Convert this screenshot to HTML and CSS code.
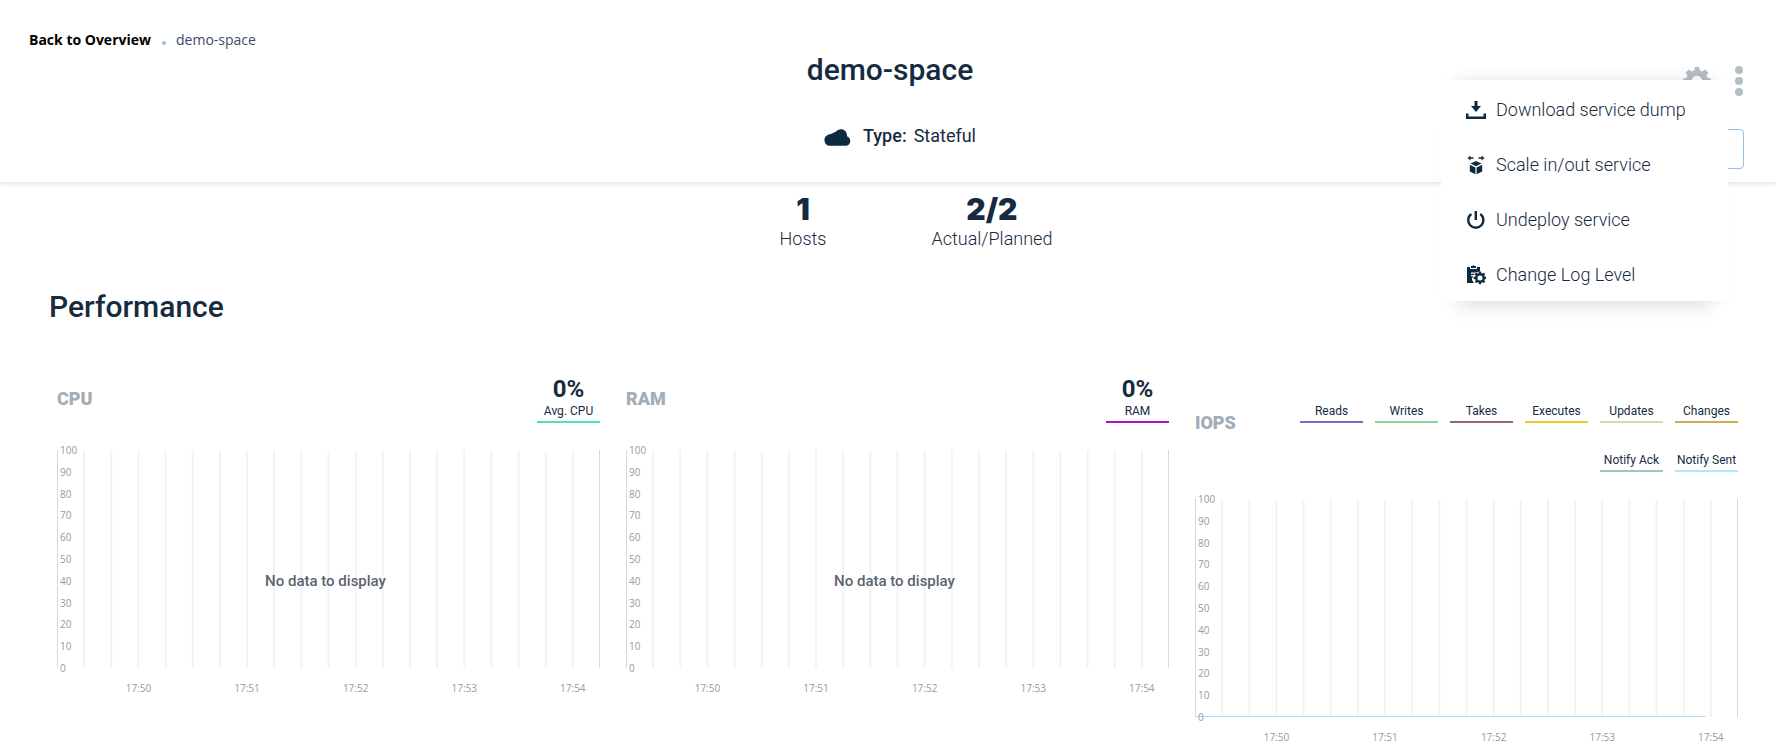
FILE: index.html
```html
<!DOCTYPE html>
<html lang="en">
<head>
<meta charset="utf-8">
<title>demo-space</title>
<link rel="stylesheet" href="styles.css">
</head>
<body>
<header class="header">
  <nav class="breadcrumb" aria-label="Breadcrumb">
    <a class="back" href="#">Back to Overview</a>
    <span class="dot"></span>
    <span class="current">demo-space</span>
  </nav>
  <h1 class="title">demo-space</h1>
  <p class="type">
    <svg class="cloud" viewBox="0 0 26 17" aria-hidden="true"><path d="M5.500 17A5.500 5.500 0 0 1 3.500 6.600Q5 5.600 7.500 5.400Q9.800 3.800 11.300 3.400A6 6 0 0 1 22 5.800Q22.300 6.800 22 7.800A4.800 4.800 0 0 1 21.500 17Z"/></svg>
    <strong>Type:</strong>
    <span>Stateful</span>
  </p>
  <div class="actions">
    <div class="icons">
      <button class="icon-btn gear" aria-label="Settings"><svg viewBox="0 0 24 24" aria-hidden="true"><path d="M10.200 0h3.600l.7 3 1.900.8 2.700-1.700 2.600 2.600-1.600 2.700.8 1.900 3.100.8v3.700l-3.100.8-.8 1.900 1.600 2.700-2.600 2.600-2.700-1.600-1.900.8-.7 3h-3.600l-.7-3-1.900-.8-2.700 1.600-2.600-2.600 1.600-2.700-.8-1.900-3.100-.8v-3.700l3.100-.8.8-1.900-1.600-2.700 2.600-2.600 2.700 1.700 1.900-.8zM12 7.500a4.500 4.500 0 1 0 0 9a4.500 4.500 0 1 0 0-9z" fill-rule="evenodd"/></svg></button>
      <button class="icon-btn more" aria-label="More actions" aria-expanded="true"><svg viewBox="0 0 8 30" aria-hidden="true"><circle cx="4" cy="4" r="4"/><circle cx="4" cy="15" r="4"/><circle cx="4" cy="26" r="4"/></svg></button>
    </div>
    <button class="outline-btn" aria-label="Service"></button>
    <div class="menu" role="menu">
      <button class="menu-item" role="menuitem"><svg viewBox="0 0 20 20" aria-hidden="true"><path d="M8.500 1h3v5h3.500l-5 6-5-6h3.500zM0 13.500h2.500v3h15v-3H20V19H0z"/></svg>Download service dump</button>
      <button class="menu-item" role="menuitem"><svg viewBox="0 0 20 20" aria-hidden="true"><path d="M1.500 3l3-2.400v1.700h3v1.500h-3v1.700zM18.500 3l-3-2.400v1.700h-3v1.500h3v1.700zM10 6l5.500 2.600L10 11.200 4.500 8.600zM3.800 9.800l5.600 2.700v6.800L3.800 16.600zM16.200 9.800l-5.600 2.700v6.800l5.600-2.700z"/></svg>Scale in/out service</button>
      <button class="menu-item" role="menuitem"><svg viewBox="0 0 20 20" aria-hidden="true"><path d="M5.300 4A7.600 7.600 0 1 0 14.300 4M9.800 1v9" fill="none" stroke="currentColor" stroke-width="2.400"/></svg>Undeploy service</button>
      <button class="menu-item" role="menuitem"><svg viewBox="0 0 20 20" aria-hidden="true"><path d="M1 2h3v2h7V2h3v4.500l-3.500 1H5v1.200h4L8 10H5v1.200h2.500L6 13v2l2 3H1zM5 1h1.500L7.500 0 8.500 1H10v2H5z"/><path d="M13 6.500h2l.4 1.700 1 .4 1.500-.9 1.300 1.300-.9 1.500.4 1 1.300.4v2l-1.300.4-.4 1 .9 1.500-1.300 1.300-1.500-.9-1 .4-.4 1.700h-2l-.4-1.700-1-.4-1.500.9-1.300-1.300.9-1.500-.4-1-1.700-.4v-2l1.700-.4.4-1-.9-1.500 1.300-1.300 1.500.9 1-.4zM14 10.400a2.500 2.500 0 1 0 0 5a2.500 2.500 0 1 0 0-5z" fill-rule="evenodd"/></svg>Change Log Level</button>
    </div>
  </div>
</header>
<main>
  <dl class="stats">
    <div class="stat"><dd>1</dd><dt>Hosts</dt></div>
    <div class="stat"><dd>2/2</dd><dt>Actual/Planned</dt></div>
  </dl>
  <h2 class="section-title">Performance</h2>
  <div class="charts" id="charts"></div>
</main>
<script src="charts.js"></script>
</body>
</html>
```
FILE: styles.css
```css
* { box-sizing: border-box; }
body {
  margin: 0;
  background: #fff;
  color: #172b3f;
  font-family: Roboto, "Liberation Sans", sans-serif;
}
button {
  margin: 0;
  padding: 0;
  border: 0;
  background: none;
  color: inherit;
  font: inherit;
}
.header {
  position: relative;
  display: flex;
  flex-direction: column;
  align-items: center;
  padding: 30px 32px 34px;
  box-shadow: 0 1px 5px rgba(23, 43, 63, 0.18);
}
.breadcrumb {
  align-self: flex-start;
  display: flex;
  align-items: center;
  margin-left: -3px;
  font: 14px/20px "Open Sans", "Noto Sans", sans-serif;
}
.back { color: #000; font-weight: 700; text-decoration: none; }
.dot {
  width: 4px;
  height: 4px;
  margin: 6px 10px 0 11px;
  border-radius: 50%;
  background: #93c3ea;
}
.current { color: #3c4a6b; }
.title {
  margin: 0 0 0 4px;
  font-size: 30px;
  line-height: 40px;
  font-weight: 500;
}
.type {
  display: flex;
  align-items: center;
  margin: 34px 0 0 24px;
  font-size: 18px;
  line-height: 24px;
}
.type strong { font-weight: 500; margin: 0 7px 0 12px; }
.cloud { width: 27px; height: 18px; margin-top: 1px; fill: #0d2b40; }
.actions {
  position: absolute;
  top: 66px;
  right: 32px;
  display: flex;
  flex-direction: column;
  align-items: flex-end;
}
.icons { display: flex; gap: 24px; padding-right: 1px; }
.icon-btn { display: block; height: 30px; fill: #b4bfc4; }
.icon-btn svg { display: block; }
.gear svg { width: 28px; height: 28px; }
.more svg { width: 8px; height: 30px; }
.outline-btn {
  width: 120px;
  height: 40px;
  margin-top: 33px;
  border: 1px solid #98bfe6;
  border-radius: 4px;
}
.menu {
  position: absolute;
  top: 14px;
  right: 16px;
  z-index: 1;
  width: 287px;
  padding-top: 1px;
  background: #fff;
  box-shadow: 0 20px 20px -17px rgba(0, 0, 0, 0.16), 0 -14px 14px -14px rgba(0, 0, 0, 0.1);
}
.menu-item {
  display: flex;
  align-items: center;
  gap: 10px;
  width: 100%;
  height: 55px;
  padding: 2px 0 0 25px;
  font-size: 18px;
  font-weight: 300;
  text-align: left;
}
.menu-item svg { width: 20px; height: 20px; fill: #0d2b40; color: #0d2b40; }
.stats {
  display: flex;
  justify-content: center;
  gap: 105px;
  margin: 0;
  padding: 11px 0 0 56px;
}
.stat { text-align: center; }
.stat dd { margin: 0; font: 900 30px/32px Inter, sans-serif; }
.stat dt { font-size: 18px; line-height: 28px; font-weight: 300; }
.section-title {
  margin: 34px 0 0 49px;
  font-size: 30px;
  line-height: 40px;
  font-weight: 500;
}
.charts {
  display: grid;
  grid-template-columns: repeat(3, minmax(0, 1fr));
  align-items: start;
  gap: 26px;
  padding: 47px 38px 10px 57px;
}
.chart-head { display: flex; align-items: center; justify-content: space-between; }
.chart-title { margin: 0; color: #a3adb5; font-size: 18px; line-height: 24px; font-weight: 900; }
.legend {
  display: flex;
  flex-wrap: wrap;
  justify-content: flex-end;
  column-gap: 12px;
  margin: 0;
  padding: 0;
  list-style: none;
}
.legend-item {
  display: flex;
  flex-direction: column;
  justify-content: flex-end;
  width: 63px;
  height: 49px;
  border-bottom: 2px solid;
  text-align: center;
  white-space: nowrap;
}
.legend-value { color: #172b3f; font-size: 24px; line-height: 24px; font-weight: 700; }
.legend-label { color: #172b3f; font-size: 12px; line-height: 20px; }
.plot {
  position: relative;
  height: 218px;
  margin-top: 27px;
}
.plot svg { display: block; width: 100%; height: 100%; }
.grid-line { stroke: #f3f3f3; stroke-width: 2; }
.edge-line { stroke: #d5d9dc; stroke-width: 1; }
.series-line { stroke: #a9e1f4; stroke-width: 1; }
.y-axis, .x-axis {
  color: #999;
  font: 10px/12px "Open Sans", "Noto Sans", sans-serif;
}
.y-axis {
  position: absolute;
  top: -6px;
  bottom: -6px;
  left: 3px;
  display: flex;
  flex-direction: column;
  justify-content: space-between;
}
.x-axis { display: grid; grid-template-columns: 5% repeat(5, 20%); padding-top: 14px; text-align: center; }
.no-data {
  position: absolute;
  top: 121px;
  left: 0;
  width: 100%;
  margin: 0;
  padding-right: 6px;
  color: #5b6470;
  font: 500 15px/20px Roboto, sans-serif;
  text-align: center;
}
```
FILE: charts.js
```js
const charts = [
  { title: 'CPU', legend: [['Avg. CPU', '#4fe0c4', '0%']] },
  { title: 'RAM', legend: [['RAM', '#b012c9', '0%']] },
  { title: 'IOPS', series: true, legend: [
    ['Reads', '#7a6bcf'], ['Writes', '#90d39a'], ['Takes', '#93637f'],
    ['Executes', '#eac92f'], ['Updates', '#dfd5ab'], ['Changes', '#cfac58'],
    ['Notify Ack', '#9fc5c9'], ['Notify Sent', '#afe8fd'] ] }
];

const line = (x, cls) => `<line class="${cls}" x1="${x}" x2="${x}" y1="0" y2="100%"/>`;

document.getElementById('charts').innerHTML = charts.map(c => {
  const legend = c.legend.map(([label, color, value]) =>
    `<li class="legend-item" style="border-color:${color}">${value ? `<span class="legend-value">${value}</span>` : ''}<span class="legend-label">${label}</span></li>`).join('');
  let lines = '';
  for (let i = 1; i < 20; i++) lines += line(i * 5 + '%', 'grid-line');
  lines += '<svg x="0.5" overflow="visible">' + line('0', 'edge-line') + '</svg>';
  lines += '<svg x="-0.5" overflow="visible">' + line('100%', 'edge-line') + '</svg>';
  if (c.series) lines += '<svg y="-0.5" overflow="visible"><line class="series-line" x1="0" x2="94%" y1="100%" y2="100%"/></svg>';
  const y = [100, 90, 80, 70, 60, 50, 40, 30, 20, 10, 0].map(v => `<span>${v}</span>`).join('');
  const x = ['17:50', '17:51', '17:52', '17:53', '17:54'].map(v => `<span>${v}</span>`).join('');
  return `<section class="chart">
    <div class="chart-head"><h3 class="chart-title">${c.title}</h3><ul class="legend">${legend}</ul></div>
    <div class="plot"><svg aria-hidden="true">${lines}</svg><div class="y-axis">${y}</div>
    ${c.series ? '' : '<p class="no-data">No data to display</p>'}</div>
    <div class="x-axis"><span></span>${x}</div>
  </section>`;
}).join('');
```
